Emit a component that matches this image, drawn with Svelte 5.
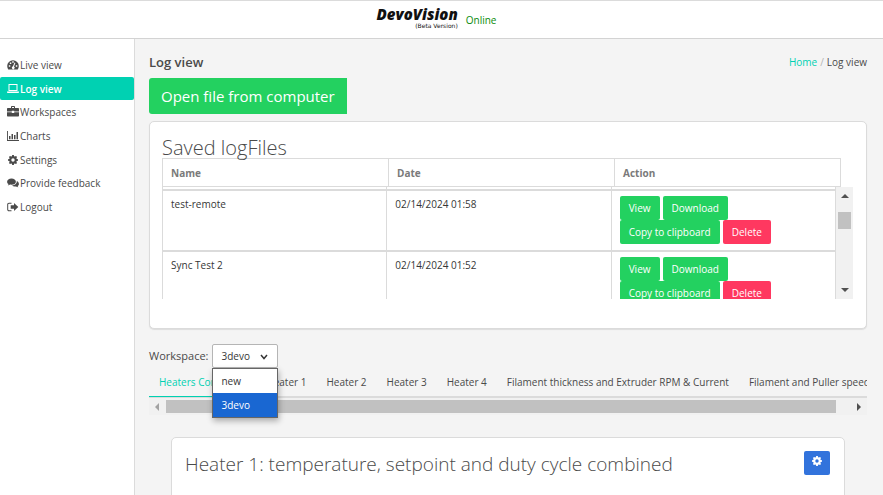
<script lang="ts">
	type Icon = 'gauge' | 'laptop' | 'briefcase' | 'chart' | 'gear' | 'comments' | 'logout';

	const menu: { label: string; icon: Icon }[] = [
		{ label: 'Live view', icon: 'gauge' },
		{ label: 'Log view', icon: 'laptop' },
		{ label: 'Workspaces', icon: 'briefcase' },
		{ label: 'Charts', icon: 'chart' },
		{ label: 'Settings', icon: 'gear' },
		{ label: 'Provide feedback', icon: 'comments' },
		{ label: 'Logout', icon: 'logout' }
	];

	const files = [
		{ name: 'test-remote', date: '02/14/2024 01:58' },
		{ name: 'Sync Test 2', date: '02/14/2024 01:52' }
	];

	const tabs = [
		'Heaters Combined',
		'Heater 1',
		'Heater 2',
		'Heater 3',
		'Heater 4',
		'Filament thickness and Extruder RPM & Current',
		'Filament and Puller speed'
	];

	const workspaces = ['new', '3devo'];

	let page = $state('Log view');
	let tab = $state('Heaters Combined');
	let workspace = $state('3devo');
	let open = $state(true);

	function pick(name: string) {
		workspace = name;
		open = false;
	}
</script>

{#snippet icon(name: Icon)}
	<svg class="icon" viewBox="0 0 12 12" aria-hidden="true">
		{#if name === 'gauge'}
			<path fill-rule="evenodd" d="M6 1.2A5.8 5.8 0 0 0 .2 7c0 1.3.4 2.4 1 3.5h9.6c.6-1.1 1-2.2 1-3.5A5.8 5.8 0 0 0 6 1.2ZM1.8 6.3h1.5v1.5H1.8ZM2.8 3.5h1.5V5H2.8ZM5.25 2.2h1.5v1.5h-1.5ZM8.8 6.3h1.5v1.5H8.8ZM7.5 3.6l.9.4-1.4 3.4a1.4 1.4 0 1 1-1-.2Z" />
		{:else if name === 'laptop'}
			<path fill-rule="evenodd" d="M1.5 1h9v7h-9ZM2.5 2v5h7V2ZM0 8.500h12v.8c0 .4-.5.7-1 .7H1c-.5 0-1-.3-1-.7Z" />
		{:else if name === 'briefcase'}
			<path fill-rule="evenodd" d="M4 2V1c0-.6.3-1 .8-1h2.400c.5 0 .8.4.8 1v1h3c.6 0 1 .4 1 1v2.500H7.200v-.8H4.800v.8H0V3c0-.6.4-1 1-1Zm1 0h2V1H5ZM0 6.300h4.800v.8h2.400v-.8H12v3.200c0 .6-.4 1-1 1H1c-.6 0-1-.4-1-1Z" />
		{:else if name === 'chart'}
			<path d="M0 1h.9v9.100H12v.9H0ZM2 6h1.500v3.300H2ZM4.500 4H6v5.300H4.500ZM7 5h1.500v4.300H7ZM9.500 2H11v7.300H9.500Z" />
		{:else if name === 'gear'}
			<path fill-rule="evenodd" d="M5.2 1h1.600l.3 1.300.8.3L9 1.900 10.100 3l-.7 1.100.3.8 1.300.3v1.600l-1.300.3-.3.8.7 1.100L9 10.100l-1.100-.7-.8.3L6.800 11H5.200l-.3-1.300-.8-.3-1.100.7L1.900 9l.7-1.100-.3-.8L1 6.800V5.200l1.300-.3.3-.8L1.900 3 3 1.900l1.100.7.8-.3ZM6 4.300a1.700 1.700 0 1 0 0 3.400 1.700 1.700 0 0 0 0-3.400Z" />
		{:else if name === 'comments'}
			<path d="M4.500 1.500C2 1.500.1 2.900.1 4.700c0 1 .6 1.900 1.500 2.400-.2.6-.5 1-.9 1.300 1 0 1.900-.4 2.500-.8l1.300.1c2.500 0 4.400-1.300 4.400-3s-1.900-3.200-4.400-3.200Z" />
			<path d="M9.800 4.100c.3 2.500-2.200 4.400-5 4.500.8.6 1.900.9 3.100.9l1.100-.1c.6.5 1.500.8 2.400.8-.4-.3-.7-.7-.8-1.200.8-.5 1.300-1.200 1.300-2.100 0-1.200-.8-2.200-2.100-2.800Z" />
		{:else}
			<path d="M4.500 1.800v1H2c-.5 0-.8.3-.8.8v4.800c0 .5.3.8.8.8h2.500v1H2C.9 10.200.2 9.500.2 8.400V3.600c0-1.100.7-1.800 1.800-1.800ZM7 2l4.300 4L7 10V7.700H3.700V4.300H7Z" />
		{/if}
	</svg>
{/snippet}

<div class="shell">
	<header class="topbar">
		<div class="logo">
			<span class="logo-name">DevoVision</span>
			<span class="logo-note">(Beta Version)</span>
		</div>
		<span class="status">Online</span>
	</header>

	<div class="columns">
		<div class="sidebar">
			<nav>
				{#each menu as item}
					<a href="#top" class:active={page === item.label} onclick={() => (page = item.label)}>
						{@render icon(item.icon)}{item.label}
					</a>
				{/each}
			</nav>
		</div>

		<main>
			<div class="title-row">
				<h1>Log view</h1>
				<div class="breadcrumb"><a href="#home">Home</a><span>/</span>Log view</div>
			</div>

			<button class="open-file">Open file from computer</button>

			<section class="card saved">
				<h2>Saved logFiles</h2>
				<table class="head">
					<thead>
						<tr><th>Name</th><th>Date</th><th>Action</th></tr>
					</thead>
				</table>
				<div class="scroll-area">
					<div class="rows">
						<table>
							<tbody>
								<tr class="cut"><td></td><td></td><td></td></tr>
								{#each files as file}
									<tr>
										<td>{file.name}</td>
										<td>{file.date}</td>
										<td>
											<div class="buttons">
												<button>View</button>
												<button>Download</button>
											</div>
											<div class="buttons">
												<button>Copy to clipboard</button>
												<button class="danger">Delete</button>
											</div>
										</td>
									</tr>
								{/each}
							</tbody>
						</table>
					</div>
					<div class="vbar">
						<i class="arrow up"></i>
						<i class="thumb"></i>
						<i class="arrow down"></i>
					</div>
				</div>
			</section>

			<div class="workspace">
				<label for="workspace">Workspace:</label>
				<div class="picker">
					<select id="workspace" bind:value={workspace}>
						{#each workspaces as name}
							<option>{name}</option>
						{/each}
					</select>
					<svg class="chevron" viewBox="0 0 8 6" aria-hidden="true"><path d="M1 1l3 3.5L7 1" /></svg>
					{#if open}
						<div class="options">
							{#each workspaces as name}
								<button class:selected={name === workspace} onclick={() => pick(name)}>{name}</button>
							{/each}
						</div>
					{/if}
				</div>
			</div>

			<div class="tabs">
				{#each tabs as name}
					<button class:current={name === tab} onclick={() => (tab = name)}>{name}</button>
				{/each}
			</div>
			<div class="hbar">
				<i class="arrow left"></i>
				<i class="thumb"></i>
				<i class="arrow right"></i>
			</div>

			<section class="card chart">
				<h2>Heater 1: temperature, setpoint and duty cycle combined</h2>
				<button class="gear" aria-label="Settings">{@render icon('gear')}</button>
			</section>
		</main>
	</div>
</div>

<style>
	:global(body) {
		margin: 0;
		background: #f4f4f4;
	}
	.shell {
		height: 100vh;
		overflow: hidden;
		display: flex;
		flex-direction: column;
		font-family: 'Open Sans', 'Noto Sans', sans-serif;
		font-size: 10px;
		line-height: 16px;
		color: #4a4a4a;
	}
	.shell * {
		box-sizing: border-box;
	}
	button,
	select {
		font: inherit;
		border: 0;
		margin: 0;
		cursor: pointer;
	}
	a {
		text-decoration: none;
	}
	.icon {
		width: 12px;
		height: 12px;
		fill: currentColor;
	}

	/* top bar */
	.topbar {
		height: 39px;
		flex: none;
		display: flex;
		justify-content: center;
		align-items: center;
		gap: 8px;
		padding-right: 10px;
		background: #fff;
		border-top: 1px solid #dbdbdb;
		border-bottom: 1px solid #d3d3d3;
	}
	.logo {
		display: flex;
		flex-direction: column;
		align-items: flex-end;
		padding-bottom: 4px;
		color: #111;
	}
	.logo-name {
		font: italic 800 15px/15px 'Open Sans', sans-serif;
	}
	.logo-note {
		font: 6px/7px 'DejaVu Sans', sans-serif;
	}
	.status {
		color: #0a8a0a;
	}

	/* side menu */
	.columns {
		flex: 1;
		min-height: 0;
		display: flex;
	}
	.sidebar {
		width: 135px;
		flex: none;
		padding-top: 14px;
		background: #fff;
		border-right: 1px solid #dbdbdb;
	}
	nav {
		display: flex;
		flex-direction: column;
		height: 166px;
	}
	nav a {
		flex: 1;
		display: flex;
		align-items: center;
		gap: 1px;
		padding-left: 7px;
		color: #4a4a4a;
	}
	nav .active {
		background: #00d1b2;
		color: #fff;
		font-weight: 600;
		border-radius: 2px;
	}

	main {
		flex: 1;
		min-width: 0;
		padding: 14px 16px 0 14px;
	}
	.title-row {
		display: flex;
		justify-content: space-between;
		align-items: center;
		height: 18px;
	}
	h1 {
		margin: 0;
		font-size: 13px;
		font-weight: 600;
	}
	.breadcrumb a {
		color: #00d1b2;
	}
	.breadcrumb span {
		padding: 0 3px;
		color: #b5b5b5;
	}
	.open-file {
		display: block;
		height: 36px;
		margin: 7px 0;
		padding: 0 12px;
		background: #23d160;
		color: #fff;
		font-size: 15px;
		font-weight: 500;
		border-radius: 3px 0 0 3px;
	}

	.card {
		background: #fff;
		border: 1px solid #dbdbdb;
		border-radius: 5px;
	}
	h2 {
		margin: 0;
		font-size: 20px;
		line-height: 20px;
		font-weight: 300;
	}
	.saved {
		height: 208px;
		padding: 16px 13px 0 12px;
		box-shadow: 0 1px 1px #ddd;
	}
	table {
		width: 100%;
		border-collapse: collapse;
		table-layout: fixed;
	}
	.head {
		width: calc(100% - 12px);
	}
	th {
		height: 28px;
		padding: 0 8px;
		border: 1px solid #dbdbdb;
		color: #7a7a7a;
		font-weight: 700;
		text-align: left;
	}
	.scroll-area {
		display: flex;
		height: 112px;
		overflow: hidden;
	}
	.rows {
		flex: 1;
	}
	td {
		padding: 5px 8px 6px;
		border: 1px solid #dbdbdb;
		border-top-width: 2px;
		vertical-align: top;
		color: #363636;
	}
	.cut td {
		height: 3px;
		padding: 0;
		border-top: 0;
	}
	.buttons {
		display: flex;
		gap: 3px;
	}
	.buttons button {
		height: 24px;
		padding: 0 9px;
		background: #23d160;
		color: #fff;
		font-weight: 500;
		border-radius: 2px;
		white-space: nowrap;
	}
	.buttons .danger {
		background: #ff3860;
	}

	/* scrollbars */
	.vbar,
	.hbar {
		flex: none;
		display: flex;
		align-items: center;
		background: #f1f1f1;
	}
	.vbar {
		width: 17px;
		flex-direction: column;
		padding: 7px 0;
	}
	.thumb {
		background: #c1c1c1;
	}
	.vbar .thumb {
		width: 13px;
		height: 17px;
		margin: 14px 0 auto;
	}
	.hbar {
		height: 17px;
		padding: 0 6px;
	}
	.hbar .thumb {
		flex: 1;
		height: 13px;
		margin: 0 21px 0 7px;
	}
	.arrow {
		border: 4px solid transparent;
	}
	.up {
		border-top: 0;
		border-bottom-color: #505050;
	}
	.down {
		border-bottom: 0;
		border-top-color: #505050;
	}
	.left {
		border-left: 0;
		border-right-color: #a3a3a3;
	}
	.right {
		border-right: 0;
		border-left-color: #505050;
	}

	/* workspace drop-down */
	.workspace {
		display: flex;
		align-items: center;
		gap: 4px;
		margin-top: 15px;
		font-size: 11px;
	}
	.picker {
		position: relative;
	}
	select {
		display: block;
		appearance: none;
		width: 66px;
		height: 24px;
		padding: 0 8px;
		background: #fff;
		border: 1px solid #b5b5b5;
		border-radius: 2px;
		color: #363636;
		font-size: 10px;
	}
	.chevron {
		position: absolute;
		top: 10px;
		right: 10px;
		width: 8px;
		height: 6px;
		fill: none;
		stroke: #363636;
		stroke-width: 1.5;
		pointer-events: none;
	}
	.options {
		position: absolute;
		z-index: 1;
		top: 100%;
		left: 0;
		width: 66px;
		background: #fff;
		border: 1px solid #666;
		box-shadow: 1px 3px 6px rgba(0, 0, 0, 0.3);
	}
	.options button {
		display: block;
		width: 100%;
		height: 24px;
		padding: 0 8px;
		background: #fff;
		color: #363636;
		font-size: 10px;
		text-align: left;
	}
	.options .selected {
		background: #1967d2;
		color: #fff;
	}

	.tabs {
		display: flex;
		height: 30px;
		overflow: hidden;
		box-shadow: inset 0 -2px #dbdbdb;
	}
	.tabs button {
		flex: none;
		height: 29px;
		padding: 0 10px;
		background: none;
		border-bottom: 1px solid transparent;
		color: #4a4a4a;
	}
	.tabs .current {
		border-bottom-color: #00d1b2;
		color: #00d1b2;
	}
	.chart {
		display: flex;
		justify-content: space-between;
		align-items: flex-start;
		height: 320px;
		margin: 22px 22px 0;
		padding: 13px 14px 13px 13px;
	}
	.chart h2 {
		font-size: 19px;
		line-height: 26px;
	}
	.gear {
		width: 26px;
		height: 24px;
		padding: 0;
		background: #3273dc;
		color: #fff;
		border-radius: 2px;
	}
</style>
